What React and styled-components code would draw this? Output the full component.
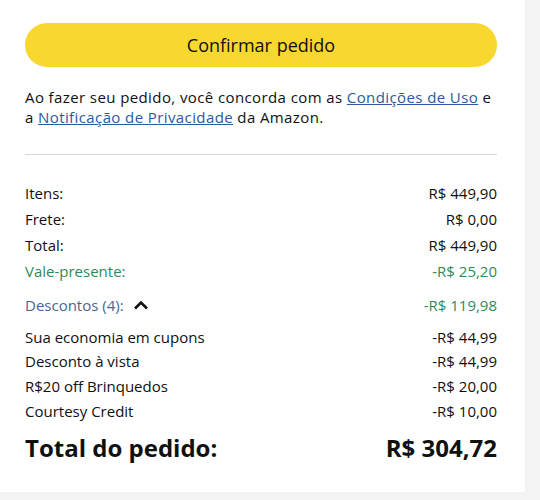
import React from 'react'
import styled, { createGlobalStyle } from 'styled-components'

const GlobalStyle = createGlobalStyle`
  body {
    margin: 0;
    background: #f3f3f3;
    font-family: "Open Sans", "Noto Sans", Arial, sans-serif;
    color: #0f1111;
  }
`

const Page = styled.div`
  width: 540px;
  height: 500px;
  overflow: hidden;
`

const Panel = styled.div`
  width: 525px;
  height: 492px;
  box-sizing: border-box;
  background: #fff;
  padding: 23px 28px 0 25px;
`

const ConfirmButton = styled.button`
  display: block;
  width: 100%;
  height: 44px;
  border: none;
  border-radius: 22px;
  background: #f8d72e;
  font-family: inherit;
  font-size: 18px;
  color: #0f1111;
  cursor: pointer;
`

const Terms = styled.p`
  margin: 20px 0 0;
  font-size: 15px;
  line-height: 20px;
  letter-spacing: 0.4px;
`

const Link = styled.a`
  color: #2a5aa0;
  text-decoration: underline;
`

const Divider = styled.hr`
  margin: 27px 0 25px;
  border: none;
  border-top: 1px solid #d5d9d9;
`

const Row = styled.div`
  display: flex;
  justify-content: space-between;
  align-items: center;
  font-size: 15px;
  height: ${p => p.h || 26}px;
  margin: ${p => p.m || '0'};
  color: ${p => p.color || '#0f1111'};
`

const Label = styled.span`
  display: flex;
  align-items: center;
  gap: 9px;
  color: ${p => p.color || 'inherit'};
`

const Grand = styled(Row)`
  font-size: 24px;
  font-weight: 700;
`

const Caret = () => (
  <svg width="16" height="10" viewBox="0 0 16 10">
    <path d="M2 8.5 L8 2.5 L14 8.5" fill="none" stroke="#111" strokeWidth="2.6" />
  </svg>
)

const GREEN = '#2f8a5c'

export default function App() {
  return (
    <Page>
      <GlobalStyle />
      <Panel>
        <ConfirmButton>Confirmar pedido</ConfirmButton>
        <Terms>
          Ao fazer seu pedido, você concorda com as <Link>Condições de Uso</Link> e
          a <Link>Notificação de Privacidade</Link> da Amazon.
        </Terms>
        <Divider />
        <Row><span>Itens:</span><span>R$ 449,90</span></Row>
        <Row><span>Frete:</span><span>R$ 0,00</span></Row>
        <Row><span>Total:</span><span>R$ 449,90</span></Row>
        <Row color={GREEN}><span>Vale-presente:</span><span>-R$ 25,20</span></Row>
        <Row m="8px 0 7px" color={GREEN}>
          <Label color="#4a6595">Descontos (4): <Caret /></Label>
          <span>-R$ 119,98</span>
        </Row>
        <Row h={24}><span>Sua economia em cupons</span><span>-R$ 44,99</span></Row>
        <Row h={24}><span>Desconto à vista</span><span>-R$ 44,99</span></Row>
        <Row h={25}><span>R$20 off Brinquedos</span><span>-R$ 20,00</span></Row>
        <Row h={25}><span>Courtesy Credit</span><span>-R$ 10,00</span></Row>
        <Grand h={34} m="7px 0 0"><span>Total do pedido:</span><span>R$ 304,72</span></Grand>
      </Panel>
    </Page>
  )
}
